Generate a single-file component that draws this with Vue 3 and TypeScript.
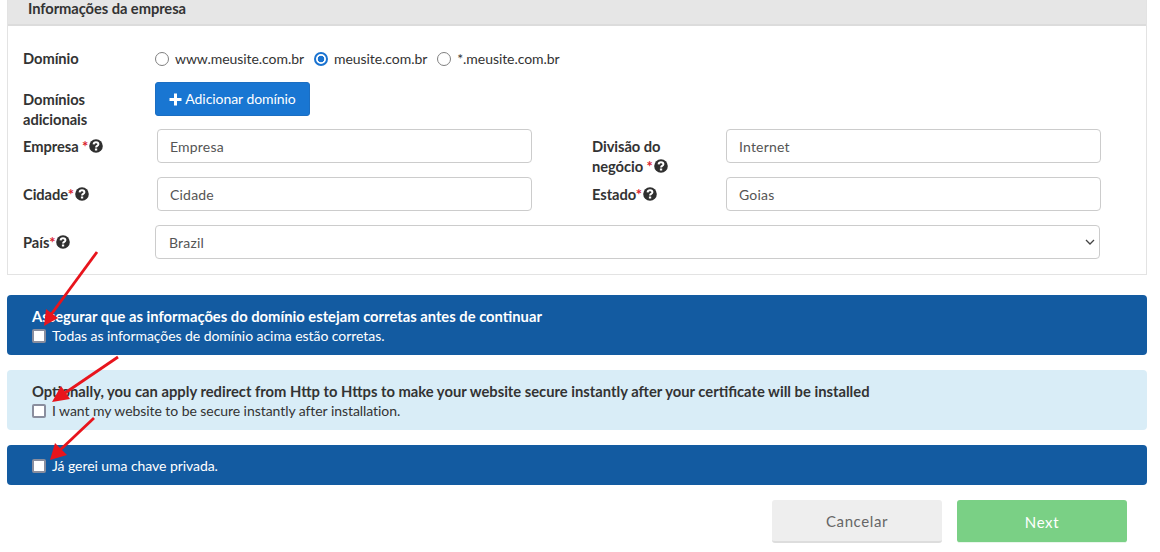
<script setup lang="ts">
interface Arrow { x1: number; y1: number; x2: number; y2: number; head: string }
const arrows: Arrow[] = [
  { x1: 97, y1: 252, x2: 50, y2: 316, head: '44,326 46,309 58,318' },
  { x1: 118, y1: 357, x2: 62, y2: 395, head: '52,402 61,386 70,399' },
  { x1: 94, y1: 418, x2: 58, y2: 452, head: '50,460 55,443 67,455' },
]
</script>

<template>
  <div class="page">
    <section class="panel">
      <h2 class="panel-head">Informações da empresa</h2>
      <div class="panel-body">
        <div class="row row-domain">
          <span class="label label-first label-domain">Domínio</span>
          <div class="radios">
            <label class="radio"><input type="radio" name="domain" />www.meusite.com.br</label>
            <label class="radio"><input type="radio" name="domain" checked />meusite.com.br</label>
            <label class="radio"><input type="radio" name="domain" />*.meusite.com.br</label>
          </div>
        </div>
        <div class="row row-add">
          <span class="label label-first label-add">Domínios adicionais</span>
          <button class="add-btn" type="button">
            <svg class="plus" viewBox="0 0 13 13" aria-hidden="true"><path d="M5 0.5h3v4.5h4.5v3H8v4.5H5V8H0.5V5H5z" /></svg>
            Adicionar domínio
          </button>
        </div>
        <div class="row row-field">
          <span class="label label-first">Empresa <i>*</i><svg class="help" viewBox="0 0 14 14" aria-hidden="true"><circle cx="7" cy="7" r="6.8" /><path d="M4.6 5.4C4.7 4 5.8 3.3 7 3.3c1.4 0 2.4.8 2.4 1.9 0 1.8-2.3 1.6-2.3 3.2" /><rect x="5.9" y="9.5" width="2.3" height="2" /></svg></span>
          <input class="control" value="Empresa" />
          <span class="label label-second">Divisão do negócio <i>*</i><svg class="help" viewBox="0 0 14 14" aria-hidden="true"><circle cx="7" cy="7" r="6.8" /><path d="M4.6 5.4C4.7 4 5.8 3.3 7 3.3c1.4 0 2.4.8 2.4 1.9 0 1.8-2.3 1.6-2.3 3.2" /><rect x="5.9" y="9.5" width="2.3" height="2" /></svg></span>
          <input class="control" value="Internet" />
        </div>
        <div class="row row-field">
          <span class="label label-first">Cidade<i>*</i><svg class="help" viewBox="0 0 14 14" aria-hidden="true"><circle cx="7" cy="7" r="6.8" /><path d="M4.6 5.4C4.7 4 5.8 3.3 7 3.3c1.4 0 2.4.8 2.4 1.9 0 1.8-2.3 1.6-2.3 3.2" /><rect x="5.9" y="9.5" width="2.3" height="2" /></svg></span>
          <input class="control" value="Cidade" />
          <span class="label label-second">Estado<i>*</i><svg class="help" viewBox="0 0 14 14" aria-hidden="true"><circle cx="7" cy="7" r="6.8" /><path d="M4.6 5.4C4.7 4 5.8 3.3 7 3.3c1.4 0 2.4.8 2.4 1.9 0 1.8-2.3 1.6-2.3 3.2" /><rect x="5.9" y="9.5" width="2.3" height="2" /></svg></span>
          <input class="control" value="Goias" />
        </div>
        <div class="row row-country">
          <span class="label label-first">País<i>*</i><svg class="help" viewBox="0 0 14 14" aria-hidden="true"><circle cx="7" cy="7" r="6.8" /><path d="M4.6 5.4C4.7 4 5.8 3.3 7 3.3c1.4 0 2.4.8 2.4 1.9 0 1.8-2.3 1.6-2.3 3.2" /><rect x="5.9" y="9.5" width="2.3" height="2" /></svg></span>
          <select class="control select"><option>Brazil</option></select>
        </div>
      </div>
    </section>

    <div class="notice notice-dark notice-tall notice-first">
      <strong>Assegurar que as informações do domínio estejam corretas antes de continuar</strong>
      <label class="check"><input type="checkbox" />Todas as informações de domínio acima estão corretas.</label>
    </div>
    <div class="notice notice-light notice-tall">
      <strong>Optionally, you can apply redirect from Http to Https to make your website secure instantly after your certificate will be installed</strong>
      <label class="check"><input type="checkbox" />I want my website to be secure instantly after installation.</label>
    </div>
    <div class="notice notice-dark notice-short">
      <label class="check"><input type="checkbox" />Já gerei uma chave privada.</label>
    </div>

    <div class="actions">
      <button class="btn btn-cancel" type="button">Cancelar</button>
      <button class="btn btn-next" type="button">Next</button>
    </div>

    <svg class="arrows" viewBox="0 0 1160 552" aria-hidden="true">
      <g v-for="(a, i) in arrows" :key="i">
        <line :x1="a.x1" :y1="a.y1" :x2="a.x2" :y2="a.y2" />
        <polygon :points="a.head" />
      </g>
    </svg>
  </div>
</template>

<style>
html, body { margin: 0; background: #fff; }
</style>

<style scoped>
.page {
  position: relative;
  box-sizing: border-box;
  width: 1160px;
  height: 552px;
  padding: 0 13px 0 7px;
  overflow: hidden;
  font-family: Lato, "Liberation Sans", sans-serif;
  font-size: 14px;
  line-height: 20px;
  letter-spacing: -0.06px;
  color: #333;
}
.panel {
  box-sizing: border-box;
  height: 275px;
  border: 1px solid #e3e3e3;
  border-top: 0;
}
.panel-head {
  box-sizing: border-box;
  height: 26px;
  margin: 0;
  padding: 0 0 0 20px;
  background: #e6e6e6;
  border-bottom: 2px solid #dcdcdc;
  font-size: 14.7px;
  font-weight: 700;
  line-height: 16px;
}
.panel-body { padding: 0 0 0 15px; }
.row { display: flex; }
.row-domain { height: 56px; align-items: center; padding-top: 10px; box-sizing: border-box; }
.row-add { height: 47px; }
.row-field { height: 48px; }
.row-country { height: 48px; }
.label { font-weight: 700; font-size: 14.7px; display: block; box-sizing: border-box; }
.label i { color: #d9232e; font-style: normal; }
.label-first { width: 132px; flex: none; }
.label-domain { padding-bottom: 2px; }
.label-add { padding-top: 7px; width: 90px; margin-right: 42px; }
.row-field .label-first { width: 134px; padding-top: 7px; }
.row-country .label-first { padding-top: 7px; }
.label-second { width: 134px; margin-left: 60px; padding-top: 7px; padding-right: 50px; }
.help { width: 14px; height: 14px; vertical-align: -1px; margin-left: 1px; }
.help circle { fill: #2f2f2f; }
.help path { fill: none; stroke: #fff; stroke-width: 2; }
.help rect { fill: #fff; }
.radios { display: flex; gap: 10px; }
.radio { display: flex; align-items: center; }
.radio input {
  appearance: none;
  box-sizing: border-box;
  width: 14px;
  height: 14px;
  margin: 0 6px 0 0;
  border: 1.5px solid #808080;
  border-radius: 50%;
  background: #fff;
}
.radio input:checked {
  border: 2px solid #1a73d0;
  background: radial-gradient(circle, #1a73d0 0 3px, #fff 3.6px);
}
.add-btn {
  box-sizing: border-box;
  width: 155px;
  height: 34px;
  padding: 0;
  border: 1px solid #1b6ec2;
  border-radius: 3px;
  background: #1976d2;
  color: #fff;
  font: inherit;
  letter-spacing: inherit;
}
.plus { width: 13px; height: 13px; fill: #fff; vertical-align: -1.5px; }
.control {
  box-sizing: border-box;
  width: 375px;
  height: 34px;
  padding: 0 12px;
  border: 1px solid #ccc;
  border-radius: 4px;
  background: #fff;
  color: #555;
  font: inherit;
  letter-spacing: 0.2px;
  outline: none;
}
.select {
  appearance: none;
  width: 945px;
  padding: 2px 13px 0;
  background: #fff url("data:image/svg+xml;utf8,<svg xmlns='http://www.w3.org/2000/svg' width='10' height='6'><path d='M1 1l4 4 4-4' fill='none' stroke='%23444' stroke-width='1.3'/></svg>") no-repeat right 4px center;
}
.notice {
  box-sizing: border-box;
  border-radius: 4px;
  padding: 0 25px;
  display: flex;
  flex-direction: column;
  margin-top: 15px;
}
.notice strong { font-weight: 700; font-size: 14.75px; letter-spacing: 0; }
.notice-first { margin-top: 20px; }
.notice-tall { height: 60px; padding-top: 11px; }
.notice-short { height: 40px; padding-top: 11px; }
.notice-dark { background: #135ba1; color: #fff; }
.notice-light { background: #d9edf7; color: #333; }
.check { display: flex; align-items: center; }
.check input {
  appearance: none;
  box-sizing: border-box;
  width: 14px;
  height: 14px;
  margin: 0 6px 0 0;
  flex: none;
  background: #fff;
  border: 2px solid #8a8e9e;
  border-radius: 2px;
}
.actions {
  display: flex;
  justify-content: flex-end;
  gap: 15px;
  padding: 15px 20px 0 0;
}
.btn {
  box-sizing: border-box;
  width: 170px;
  height: 43px;
  padding: 1px 0 0;
  border: 0;
  border-radius: 3px;
  font: inherit;
  font-size: 15px;
  letter-spacing: 0.6px;
}
.btn-cancel { background: #eee; color: #666; border-bottom: 2px solid #ddd; }
.btn-next { background: #7ad085; color: #fff; border-bottom: 1px solid #e9f6eb; }
.arrows {
  position: absolute;
  inset: 0;
  width: 1160px;
  height: 552px;
  pointer-events: none;
}
.arrows line { stroke: #e8141c; stroke-width: 2.8; }
.arrows polygon { fill: #e8141c; }
</style>
